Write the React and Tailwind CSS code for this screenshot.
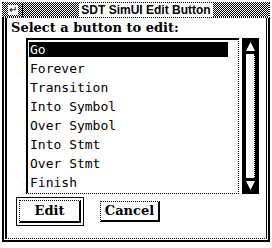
const dither = "bg-[repeating-conic-gradient(#000_0%_25%,#fff_0%_50%)] bg-[length:2px_2px]";

const items = ["Go", "Forever", "Transition", "Into Symbol", "Over Symbol", "Into Stmt", "Over Stmt", "Finish"];

export default function App() {
    return (
        <div className="w-[272px] h-[248px] bg-white p-[2px] font-['Liberation_Sans',sans-serif] text-black overflow-hidden">
            {/* title bar */}
            <div className="h-[16px] flex border border-dotted border-black">
                <div className={`w-[20px] h-full border-r border-black ${dither} flex items-center justify-center`}>
                    <span className="bg-white text-[10px] leading-[10px] px-[1px]">↵</span>
                </div>
                <div className={`flex-1 h-full ${dither} flex items-center justify-center`}>
                    <span className="bg-white font-bold text-[12px] leading-[14px] px-[2px]">SDT SimUI Edit Button</span>
                </div>
            </div>

            {/* window body */}
            <div className="h-[224px] border-x-[2px] border-b-[2px] border-black border-double px-[1px] pb-[1px]">
                <div className="h-full border-l-2 border-r border-b border-black [border-bottom-style:dotted] flex flex-col">
                    <div className="pl-[4px] pt-[1px] font-['DejaVu_Serif',serif] font-bold text-[13px] leading-[17px]">
                        Select a button to edit:
                    </div>
                    <div className="flex mt-[2px] ml-[19px] mr-[7px] h-[156px] gap-[3px]">
                        <div className="flex-1 border-t-2 border-l-2 border-r border-b border-black [border-right-style:dotted] [border-bottom-style:dotted] pt-[2px] pl-[1px] pr-[10px] font-['DejaVu_Sans_Mono',monospace] text-[13px]">
                            {items.map((it, i) => (
                                <div key={it} className="h-[19px] pb-[4px]">
                                    <div className={`h-[15px] leading-[15px] pl-[1px] ${i === 0 ? "bg-black text-white" : ""}`}>
                                        {it}
                                    </div>
                                </div>
                            ))}
                        </div>
                        <div className="w-[17px] bg-black flex flex-col items-center p-[2px]">
                            <div className="w-full h-[13px] flex items-center justify-center">
                                <svg width="9" height="9" viewBox="0 0 9 9"><polygon points="4.5,0 9,9 0,9" fill="#fff" /></svg>
                            </div>
                            <div className="w-[9px] flex-1 bg-white border-r border-dotted border-black my-[1px]" />
                            <div className="w-full h-[13px] flex items-center justify-center">
                                <svg width="9" height="9" viewBox="0 0 9 9"><polygon points="0,0 9,0 4.5,9" fill="#fff" /></svg>
                            </div>
                        </div>
                    </div>
                    <div className="flex items-center mt-[3px] ml-[9px] gap-[16px]">
                        <div className="border border-black p-[2px]">
                            <div className="w-[62px] h-[23px] border border-dotted border-black border-r-2 border-b-2 [border-right-style:solid] [border-bottom-style:solid] flex items-center justify-center font-['DejaVu_Serif',serif] font-bold text-[13px]">
                                Edit
                            </div>
                        </div>
                        <div className="w-[60px] h-[21px] border border-dotted border-black border-r-2 border-b-2 [border-right-style:solid] [border-bottom-style:solid] flex items-center justify-center font-['DejaVu_Serif',serif] font-bold text-[13px]">
                            Cancel
                        </div>
                    </div>
                </div>
            </div>
        </div>
    );
}
